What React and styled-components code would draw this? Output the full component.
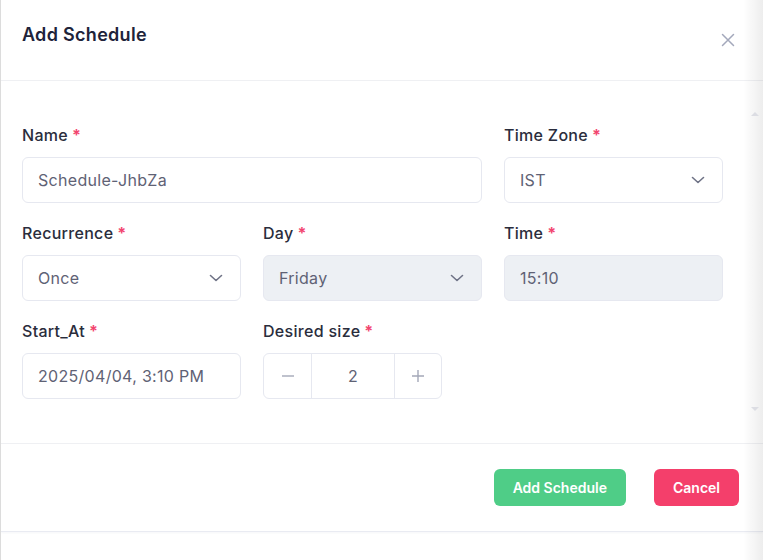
import React from "react";
import styled, { createGlobalStyle } from "styled-components";

const GlobalStyle = createGlobalStyle`
  html, body {
    margin: 0;
    padding: 0;
    background: #ffffff;
  }
  body {
    font-family: Inter, "Open Sans", "Liberation Sans", sans-serif;
    -webkit-font-smoothing: antialiased;
  }
`;

const Chevron = () => (
  <svg width="14" height="8" viewBox="0 0 14 8" fill="none">
    <path d="M1.5 1.5L7 6.5L12.5 1.5" stroke="#6f7386" strokeWidth="1.6" strokeLinecap="round" strokeLinejoin="round" />
  </svg>
);

const fields = [
  { label: "Recurrence", value: "Once", select: true },
  { label: "Day", value: "Friday", select: true, disabled: true },
  { label: "Time", value: "15:10", disabled: true },
];

const App = () => {
  return (
    <>
      <GlobalStyle />
      <Page>
        <Modal>
          <Header>
            <h1>Add Schedule</h1>
            <CloseButton aria-label="close">
              <svg width="14" height="14" viewBox="0 0 14 14" fill="none">
                <path d="M1.5 1.5L12.5 12.5M12.5 1.5L1.5 12.5" stroke="#a3a8bb" strokeWidth="1.5" strokeLinecap="round" />
              </svg>
            </CloseButton>
          </Header>

          <Body>
            <Field span={2}>
              <Label>Name</Label>
              <Input>Schedule-JhbZa</Input>
            </Field>
            <Field>
              <Label>Time Zone</Label>
              <Input>
                IST
                <Chevron />
              </Input>
            </Field>

            {fields.map((f) => (
              <Field key={f.label}>
                <Label>{f.label}</Label>
                <Input disabled={f.disabled}>
                  {f.value}
                  {f.select && <Chevron />}
                </Input>
              </Field>
            ))}

            <Field>
              <Label>Start_At</Label>
              <Input>2025/04/04, 3:10 PM</Input>
            </Field>
            <Field>
              <Label>Desired size</Label>
              <Stepper>
                <StepButton aria-label="decrease">
                  <svg width="14" height="14" viewBox="0 0 14 14" fill="none">
                    <path d="M1 7H13" stroke="#a4a8b8" strokeWidth="1.4" />
                  </svg>
                </StepButton>
                <StepValue>2</StepValue>
                <StepButton aria-label="increase">
                  <svg width="14" height="14" viewBox="0 0 14 14" fill="none">
                    <path d="M1 7H13M7 1V13" stroke="#a4a8b8" strokeWidth="1.4" />
                  </svg>
                </StepButton>
              </Stepper>
            </Field>
          </Body>

          <Footer>
            <Button color="#4fcd87">Add Schedule</Button>
            <Button color="#f43f6b">Cancel</Button>
          </Footer>
        </Modal>

        <EdgeShade>
          <Arrow up />
          <Arrow />
        </EdgeShade>
      </Page>
    </>
  );
};

const Page = styled.div`
  position: relative;
  width: 763px;
  height: 560px;
  overflow: hidden;
  border-left: 1px solid #dcdcdc;
  box-sizing: border-box;
`;

const Modal = styled.div`
  display: flex;
  flex-direction: column;
`;

const Header = styled.div`
  height: 81px;
  box-sizing: border-box;
  display: flex;
  justify-content: space-between;
  align-items: flex-start;
  padding: 24px 28px 0 21px;
  border-bottom: 1px solid #eff0f3;

  h1 {
    margin: 0;
    font-size: 18px;
    line-height: 22px;
    font-weight: 600;
    color: #20233a;
    letter-spacing: 0.3px;
  }
`;

const CloseButton = styled.button`
  border: none;
  background: none;
  padding: 0;
  margin-top: 9px;
  display: flex;
  cursor: pointer;
`;

const Body = styled.div`
  display: grid;
  grid-template-columns: repeat(3, 219px);
  column-gap: 22px;
  row-gap: 20px;
  padding: 44px 21px 44px;
  border-bottom: 1px solid #eff0f3;
`;

const Field = styled.div`
  display: flex;
  flex-direction: column;
  gap: 12px;
  grid-column: span ${(p) => p.span || 1};
`;

const Label = styled.label`
  display: block;
  height: 20px;
  font-size: 16px;
  line-height: 20px;
  font-weight: 500;
  color: #2a2d3c;
  letter-spacing: 0.3px;

  &::after {
    content: "*";
    color: #f2456f;
    margin-left: 4px;
    font-weight: 700;
  }
`;

const Input = styled.div`
  height: 46px;
  box-sizing: border-box;
  display: flex;
  align-items: center;
  justify-content: space-between;
  padding: 0 17px 0 15px;
  border: 1px solid #e6e8f0;
  border-radius: 6px;
  background: ${(p) => (p.disabled ? "#edf0f4" : "#ffffff")};
  font-size: 16px;
  color: #5f6275;
  letter-spacing: 0.3px;
`;

const Stepper = styled.div`
  width: 179px;
  height: 46px;
  box-sizing: border-box;
  display: grid;
  grid-template-columns: 47px 1fr 46px;
  border: 1px solid #e6e8f0;
  border-radius: 6px;
`;

const StepButton = styled.button`
  border: none;
  background: none;
  padding: 0;
  display: flex;
  align-items: center;
  justify-content: center;
`;

const StepValue = styled.div`
  display: flex;
  align-items: center;
  justify-content: center;
  border-left: 1px solid #e6e8f0;
  border-right: 1px solid #e6e8f0;
  font-size: 16px;
  color: #5f6275;
`;

const Footer = styled.div`
  height: 88px;
  box-sizing: border-box;
  display: flex;
  justify-content: flex-end;
  align-items: center;
  gap: 28px;
  padding-right: 24px;
  border-bottom: 1px solid #e9ebf2;
  box-shadow: 0 1px 2px rgba(60, 70, 120, 0.05);
`;

const Button = styled.button`
  height: 37px;
  padding: 0 19px;
  border: none;
  border-radius: 6px;
  background: ${(p) => p.color};
  color: #ffffff;
  font-family: inherit;
  font-size: 14px;
  font-weight: 600;
  cursor: pointer;
`;

const EdgeShade = styled.div`
  position: absolute;
  top: 0;
  right: 0;
  width: 20px;
  height: 100%;
  background: linear-gradient(to right, rgba(0, 0, 0, 0), rgba(0, 0, 0, 0.07));
  pointer-events: none;
  display: flex;
  flex-direction: column;
  justify-content: space-between;
  align-items: center;
  padding: 112px 0 149px 4px;
  box-sizing: border-box;
`;

const Arrow = styled.span`
  width: 0;
  height: 0;
  border-left: 4px solid transparent;
  border-right: 4px solid transparent;
  ${(p) =>
    p.up
      ? "border-bottom: 4px solid #dcdde3;"
      : "border-top: 4px solid #dcdde3;"}
`;

export default App;
